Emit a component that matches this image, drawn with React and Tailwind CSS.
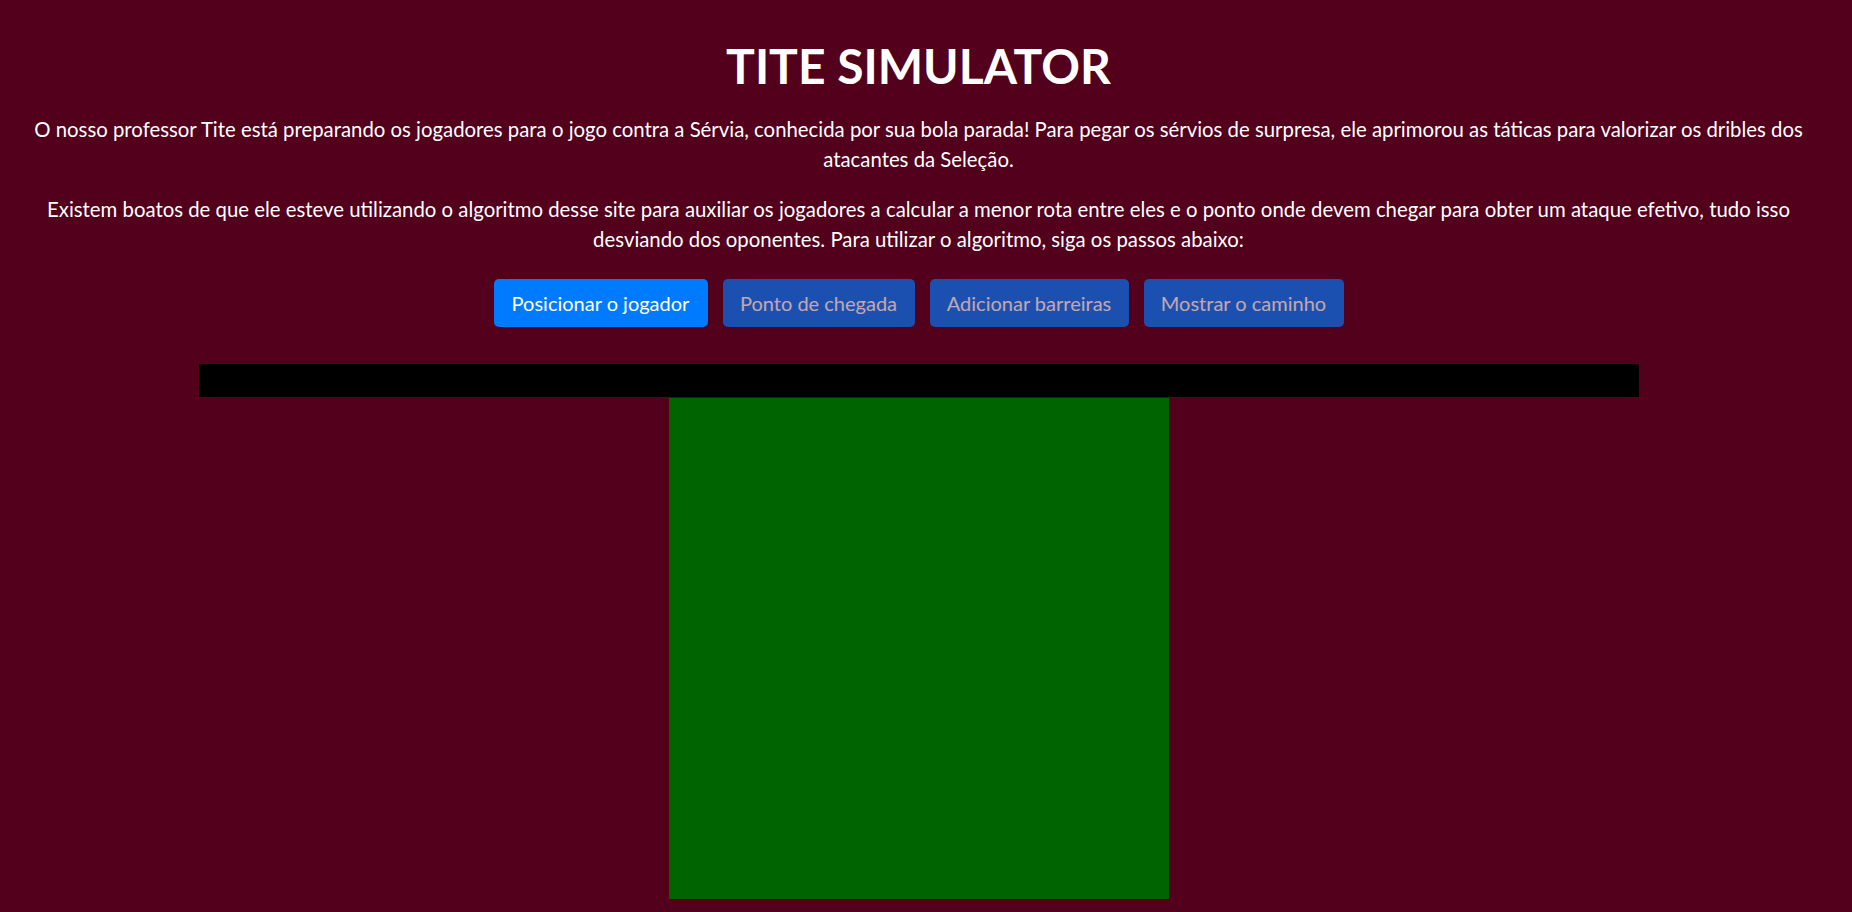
export default function App() {
  const steps = [
    { label: 'Posicionar o jogador', width: 'w-[214px]', active: true },
    { label: 'Ponto de chegada', width: 'w-[192px]', active: false },
    { label: 'Adicionar barreiras', width: 'w-[199px]', active: false },
    { label: 'Mostrar o caminho', width: 'w-[200px]', active: false },
  ];

  return (
    <div className="min-h-screen w-full bg-[#52001c] text-white font-['Lato','Noto_Sans',sans-serif] overflow-hidden">
      <div className="w-[1837px] flex flex-col items-center text-center">
        {/* Header */}
        <h1 className="mt-[36px] mb-[18px] text-[48px] leading-[60px] font-bold">TITE SIMULATOR</h1>
        <p className="text-[20.35px] leading-[30px]">
          O nosso professor Tite está preparando os jogadores para o jogo contra a Sérvia, conhecida por sua bola parada! Para pegar os sérvios de surpresa, ele aprimorou as táticas para valorizar os dribles dos
          <br />
          atacantes da Seleção.
        </p>
        <p className="mt-[20px] text-[20.35px] leading-[30px]">
          Existem boatos de que ele esteve utilizando o algoritmo desse site para auxiliar os jogadores a calcular a menor rota entre eles e o ponto onde devem chegar para obter um ataque efetivo, tudo isso
          <br />
          desviando dos oponentes. Para utilizar o algoritmo, siga os passos abaixo:
        </p>

        {/* Steps */}
        <div className="mt-[25px] flex gap-[15px]">
          {steps.map(s => (
            <button
              key={s.label}
              disabled={!s.active}
              className={`${s.width} h-[48px] rounded-[5px] bg-[#007bff] text-[20px] text-white flex items-center justify-center ${s.active ? '' : 'opacity-65'}`}
            >
              {s.label}
            </button>
          ))}
        </div>

        {/* Field */}
        <div className="mt-[37px] w-[1440px] h-[33px] bg-black" />
        <div className="mt-px w-[500px] h-[501px] bg-[#006400]" />
      </div>
    </div>
  );
}
